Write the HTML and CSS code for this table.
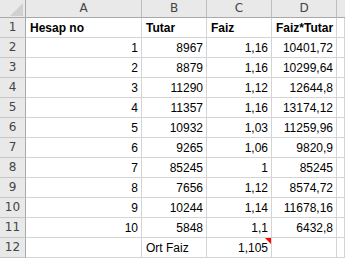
FILE: index.html
```html
<!DOCTYPE html>
<html>
<head>
<meta charset="utf-8">
<link rel="stylesheet" href="styles.css">
</head>
<body>
<div class="sheet">
  <div class="hd corner"><span class="tri"></span></div>
  <div class="hd col">A</div><div class="hd col">B</div><div class="hd col">C</div><div class="hd col">D</div><div class="hd col e"></div>

  <div class="hd row">1</div><div class="c b">Hesap no</div><div class="c b">Tutar</div><div class="c b">Faiz</div><div class="c b">Faiz*Tutar</div><div class="c"></div>
  <div class="hd row">2</div><div class="c n">1</div><div class="c n">8967</div><div class="c n">1,16</div><div class="c n">10401,72</div><div class="c"></div>
  <div class="hd row">3</div><div class="c n">2</div><div class="c n">8879</div><div class="c n">1,16</div><div class="c n">10299,64</div><div class="c"></div>
  <div class="hd row">4</div><div class="c n">3</div><div class="c n">11290</div><div class="c n">1,12</div><div class="c n">12644,8</div><div class="c"></div>
  <div class="hd row">5</div><div class="c n">4</div><div class="c n">11357</div><div class="c n">1,16</div><div class="c n">13174,12</div><div class="c"></div>
  <div class="hd row">6</div><div class="c n">5</div><div class="c n">10932</div><div class="c n">1,03</div><div class="c n">11259,96</div><div class="c"></div>
  <div class="hd row">7</div><div class="c n">6</div><div class="c n">9265</div><div class="c n">1,06</div><div class="c n">9820,9</div><div class="c"></div>
  <div class="hd row">8</div><div class="c n">7</div><div class="c n">85245</div><div class="c n">1</div><div class="c n">85245</div><div class="c"></div>
  <div class="hd row">9</div><div class="c n">8</div><div class="c n">7656</div><div class="c n">1,12</div><div class="c n">8574,72</div><div class="c"></div>
  <div class="hd row">10</div><div class="c n">9</div><div class="c n">10244</div><div class="c n">1,14</div><div class="c n">11678,16</div><div class="c"></div>
  <div class="hd row">11</div><div class="c n">10</div><div class="c n">5848</div><div class="c n">1,1</div><div class="c n">6432,8</div><div class="c"></div>
  <div class="hd row">12</div><div class="c"></div><div class="c">Ort Faiz</div><div class="c n note">1,105<span class="flag"></span></div><div class="c"></div><div class="c"></div>
</div>
</body>
</html>
```

FILE: styles.css
```css
html, body {
  margin: 0;
  padding: 0;
  background: #ffffff;
}

.sheet {
  display: grid;
  grid-template-columns: 26px 116px 65px 65px 65px 1fr;
  grid-template-rows: 18px repeat(12, 20px);
  width: 345px;
  height: 259px;
  overflow: hidden;
  font-family: "Liberation Sans", Arial, sans-serif;
  font-size: 12px;
  color: #000;
}

.c {
  border-right: 1px solid #d4d4d4;
  border-bottom: 1px solid #d4d4d4;
  padding: 0 3px 0 4px;
  line-height: 20px;
  white-space: nowrap;
  overflow: hidden;
}

.c.n {
  text-align: right;
}

.c.b {
  font-weight: bold;
}

.note {
  position: relative;
  overflow: visible;
}

.flag {
  position: absolute;
  top: 0;
  right: 0;
  width: 6px;
  height: 6px;
  background: #ff0000;
  clip-path: polygon(0 0, 100% 0, 100% 100%);
}

.hd {
  background: #e9e9e9;
  color: #444444;
  font-family: "DejaVu Sans", sans-serif;
  font-size: 12px;
  border-right: 1px solid #bdbdbd;
  border-bottom: 1px solid #bdbdbd;
  text-align: center;
}

.hd.col {
  line-height: 17px;
  border-bottom-color: #a9a9a9;
}

.hd.col.e {
  border-right: none;
}

.hd.row {
  line-height: 19px;
  border-right-color: #a9a9a9;
  border-bottom-color: #c6c6c6;
}

.corner {
  position: relative;
  border-right-color: #a9a9a9;
  border-bottom-color: #a9a9a9;
}

.tri {
  position: absolute;
  right: 2px;
  bottom: 1px;
  width: 13px;
  height: 13px;
  background: #d0d0d0;
  clip-path: polygon(100% 0, 100% 100%, 0 100%);
}
```
